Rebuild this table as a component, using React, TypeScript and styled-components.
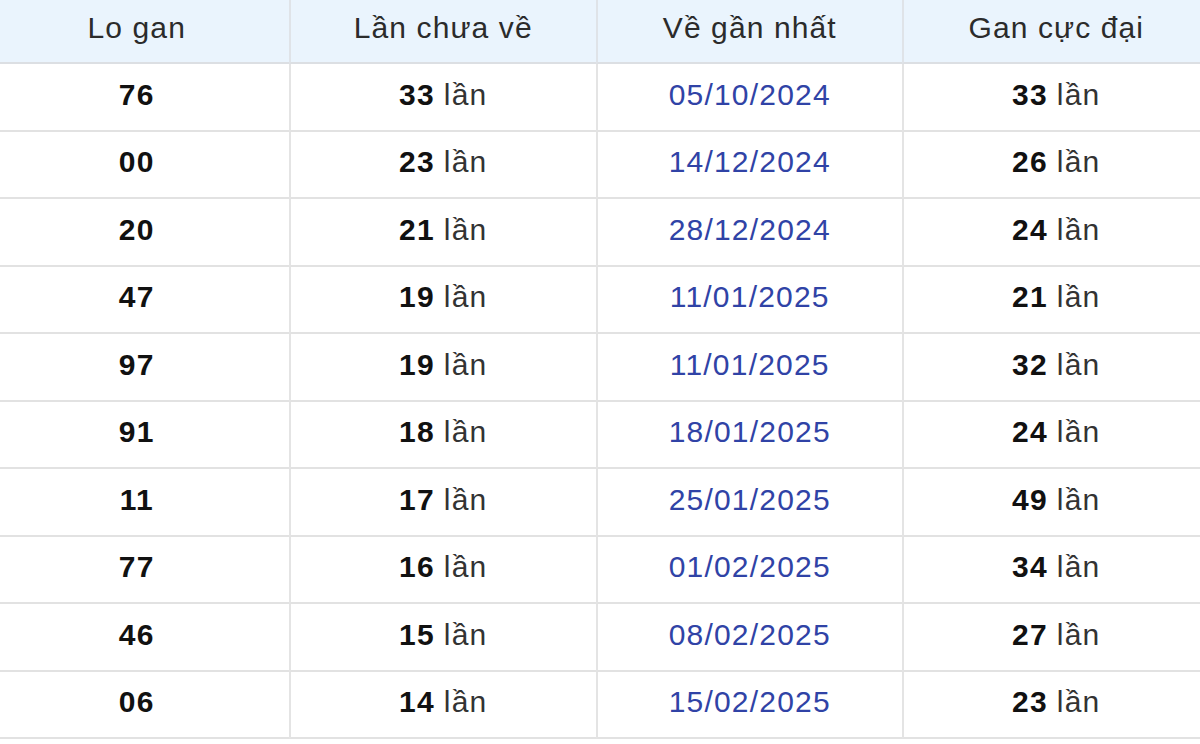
import React from "react";
import styled, { createGlobalStyle } from "styled-components";

const GlobalStyle = createGlobalStyle`
  html, body {
    margin: 0;
    padding: 0;
    background: #ffffff;
    overflow: hidden;
  }
  body {
    font-family: "Liberation Sans", Arial, sans-serif;
  }
`;

const Page = styled.div`
  width: 1200px;
  height: 744px;
  overflow: hidden;
  background: #fff;
`;

const Table = styled.div`
  display: grid;
  grid-template-columns: repeat(4, 306.5px);
  margin-left: -17.5px;
  width: 1226px;
`;

const HeadCell = styled.div`
  height: 64px;
  box-sizing: border-box;
  display: flex;
  align-items: center;
  justify-content: center;
  padding-bottom: 6px;
  background: #eaf4fd;
  border-bottom: 2px solid #dcdfe3;
  border-left: 2px solid #dfe3e8;
  font-size: 30px;
  letter-spacing: 1.1px;
  color: #2b2b2b;
`;

const Cell = styled.div<{ $date?: boolean }>`
  height: 67.5px;
  box-sizing: border-box;
  display: flex;
  align-items: center;
  justify-content: center;
  padding-bottom: 4px;
  border-bottom: 2px solid #e2e2e2;
  border-left: 2px solid #e4e4e4;
  font-size: 30px;
  letter-spacing: 1.2px;
  color: ${(p) => (p.$date ? "#3043a6" : "#333")};
`;

const Num = styled.b`
  font-weight: 700;
  color: #111;
`;

const Times = styled.span`
  margin-left: 9px;
  color: #333;
`;

const rows = [
  ["76", "33", "05/10/2024", "33"],
  ["00", "23", "14/12/2024", "26"],
  ["20", "21", "28/12/2024", "24"],
  ["47", "19", "11/01/2025", "21"],
  ["97", "19", "11/01/2025", "32"],
  ["91", "18", "18/01/2025", "24"],
  ["11", "17", "25/01/2025", "49"],
  ["77", "16", "01/02/2025", "34"],
  ["46", "15", "08/02/2025", "27"],
  ["06", "14", "15/02/2025", "23"],
];

const Count = ({ n }: { n: string }) => (
  <>
    <Num>{n}</Num>
    <Times>lần</Times>
  </>
);

export default function App() {
  return (
    <Page>
      <GlobalStyle />
      <Table>
        <HeadCell>Lo gan</HeadCell>
        <HeadCell>Lần chưa về</HeadCell>
        <HeadCell>Về gần nhất</HeadCell>
        <HeadCell>Gan cực đại</HeadCell>
        {rows.map((r, i) => (
          <React.Fragment key={i}>
            <Cell>
              <Num>{r[0]}</Num>
            </Cell>
            <Cell>
              <Count n={r[1]} />
            </Cell>
            <Cell $date>{r[2]}</Cell>
            <Cell>
              <Count n={r[3]} />
            </Cell>
          </React.Fragment>
        ))}
      </Table>
    </Page>
  );
}
